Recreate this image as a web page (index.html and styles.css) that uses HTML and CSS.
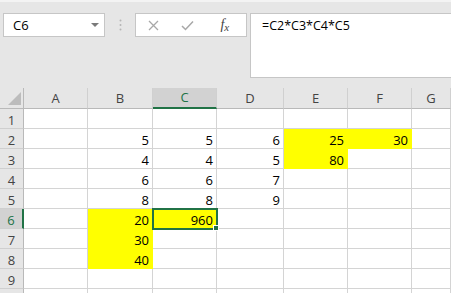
FILE: index.html
```html
<!DOCTYPE html>
<html lang="en">
<head>
    <meta charset="UTF-8">
    <meta name="viewport" content="width=device-width, initial-scale=1.0">
    <title>Book1 - Excel</title>
    <link rel="stylesheet" href="styles.css">
</head>
<body>
    <div class="topbar">
        <div class="namebox">C6<span class="caret"></span></div>
        <div class="grip">
            <svg width="3" height="12" viewBox="0 0 3 12"><circle cx="1.5" cy="1.5" r="1" fill="#b5b5b5"/><circle cx="1.5" cy="6" r="1" fill="#b5b5b5"/><circle cx="1.5" cy="10.5" r="1" fill="#b5b5b5"/></svg>
        </div>
        <div class="fxbtns">
            <span class="btn cancel">
                <svg width="11" height="11" viewBox="0 0 11 11"><path d="M1 1L10 10M10 1L1 10" stroke="#a8a8a8" stroke-width="1.3"/></svg>
            </span>
            <span class="btn enter">
                <svg width="13" height="11" viewBox="0 0 13 11"><path d="M1 6L4.5 9.5L12 1.5" fill="none" stroke="#a8a8a8" stroke-width="1.5"/></svg>
            </span>
            <span class="btn fx"><i>f</i><i class="x">x</i></span>
        </div>
        <div class="formula">=C2*C3*C4*C5</div>
    </div>

    <div class="sheet">
        <div class="corner"><span class="tri"></span></div>
        <div class="colhead">A</div><div class="colhead">B</div><div class="colhead sel">C</div><div class="colhead">D</div><div class="colhead">E</div><div class="colhead">F</div><div class="colhead">G</div>

        <div class="rowhead">1</div><div class="c"></div><div class="c"></div><div class="c"></div><div class="c"></div><div class="c"></div><div class="c"></div><div class="c"></div>
        <div class="rowhead">2</div><div class="c"></div><div class="c">5</div><div class="c">5</div><div class="c">6</div><div class="c yel">25</div><div class="c yel">30</div><div class="c"></div>
        <div class="rowhead">3</div><div class="c"></div><div class="c">4</div><div class="c">4</div><div class="c">5</div><div class="c yel">80</div><div class="c"></div><div class="c"></div>
        <div class="rowhead">4</div><div class="c"></div><div class="c">6</div><div class="c">6</div><div class="c">7</div><div class="c"></div><div class="c"></div><div class="c"></div>
        <div class="rowhead">5</div><div class="c"></div><div class="c">8</div><div class="c">8</div><div class="c">9</div><div class="c"></div><div class="c"></div><div class="c"></div>
        <div class="rowhead sel">6</div><div class="c"></div><div class="c yel">20</div><div class="c yel active">960</div><div class="c"></div><div class="c"></div><div class="c"></div><div class="c"></div>
        <div class="rowhead">7</div><div class="c"></div><div class="c yel">30</div><div class="c"></div><div class="c"></div><div class="c"></div><div class="c"></div><div class="c"></div>
        <div class="rowhead">8</div><div class="c"></div><div class="c yel">40</div><div class="c"></div><div class="c"></div><div class="c"></div><div class="c"></div><div class="c"></div>
        <div class="rowhead">9</div><div class="c"></div><div class="c"></div><div class="c"></div><div class="c"></div><div class="c"></div><div class="c"></div><div class="c"></div>
        <div class="rowhead"></div><div class="c"></div><div class="c"></div><div class="c"></div><div class="c"></div><div class="c"></div><div class="c"></div><div class="c"></div>
    </div>
</body>
</html>
```

FILE: styles.css
```css
body {
    margin: 0;
    height: 293px;
    overflow: hidden;
    background: #e6e6e6;
    font-family: "Open Sans", sans-serif;
    font-size: 13px;
    color: #000;
}

/* formula bar */
.topbar {
    height: 88px;
    box-sizing: border-box;
    border-top: 2px solid #f3f3f3;
    padding-top: 11px;
    display: flex;
    align-items: flex-start;
}
.namebox {
    position: relative;
    margin-left: 3px;
    width: 102px;
    height: 24px;
    box-sizing: border-box;
    background: white;
    border: 1px solid #c6c6c6;
    padding-left: 9px;
    line-height: 22px;
}
.caret {
    position: absolute;
    right: 5px;
    top: 9px;
    border-left: 4px solid transparent;
    border-right: 4px solid transparent;
    border-top: 4px solid #7a7a7a;
}
.grip {
    width: 30px;
    height: 24px;
    display: flex;
    align-items: center;
    justify-content: center;
}
.fxbtns {
    width: 112px;
    height: 24px;
    box-sizing: border-box;
    background: white;
    border: 1px solid #c6c6c6;
    display: flex;
    align-items: center;
}
.btn { display: flex; justify-content: center; align-items: center; }
.cancel { width: 36px; }
.enter { width: 34px; }
.fx {
    width: 44px;
    font-family: "Liberation Serif", serif;
    font-size: 14px;
    color: #444;
}
.fx .x { font-size: 11px; margin-top: 3px; margin-left: 0; }
.formula {
    flex: 1;
    margin-left: 3px;
    height: 65px;
    box-sizing: border-box;
    background: white;
    border: 1px solid #c6c6c6;
    border-right: none;
    padding: 3px 11px;
    font-size: 12.5px;
    line-height: 17px;
}

/* grid */
.sheet {
    display: grid;
    grid-template-columns: 24px 64px 65px 64px 67px 64px 64px 1fr;
    grid-template-rows: 21px;
    grid-auto-rows: 20px;
}
.corner, .colhead, .rowhead, .c {
    box-sizing: border-box;
    border-right: 1px solid #d4d4d4;
    border-bottom: 1px solid #d4d4d4;
}
.corner {
    position: relative;
    border-right-color: #b9b9b9;
    border-bottom-color: #b9b9b9;
}
.tri {
    position: absolute;
    right: 2px;
    bottom: 3px;
    border-left: 13px solid transparent;
    border-bottom: 13px solid #bcbcbc;
}
.colhead {
    text-align: center;
    line-height: 20px;
    color: #444;
    border-right-color: #d0d0d0;
    border-bottom-color: #b9b9b9;
}
.rowhead {
    text-align: center;
    padding-top: 3px;
    line-height: 16px;
    color: #444;
    border-right-color: #b9b9b9;
    border-bottom-color: #cfcfcf;
}
.colhead.sel {
    background: #d2d2d2;
    color: #217346;
    border-bottom: 2px solid #217346;
    line-height: 19px;
}
.rowhead.sel {
    background: #d2d2d2;
    color: #217346;
    border-right: 2px solid #217346;
}
.c {
    background: white;
    text-align: right;
    padding: 3px 3px 0 0;
    line-height: 16px;
}
.c.yel {
    background: #ffff00;
    border-color: #ffff00;
}
.c.active {
    position: relative;
    z-index: 1;
    outline: 2px solid #217346;
    outline-offset: -1px;
}
.c.active::after {
    content: "";
    position: absolute;
    right: -3px;
    bottom: -3px;
    width: 6px;
    height: 6px;
    box-sizing: border-box;
    background: #217346;
    border: 1px solid white;
}
```
